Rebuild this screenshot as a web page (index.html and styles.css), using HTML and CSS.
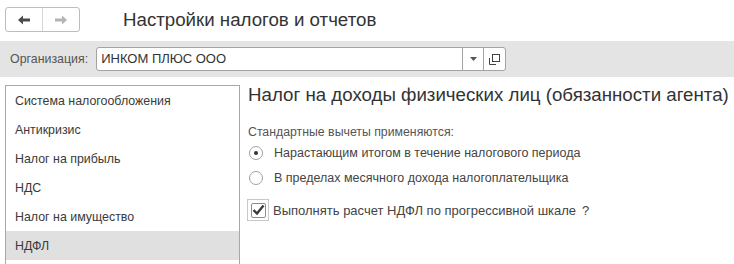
FILE: index.html
```html
<!DOCTYPE html>
<html lang="ru">
<head>
  <meta charset="UTF-8" />
  <title>Настройки налогов и отчетов</title>
  <link rel="stylesheet" href="styles.css">
</head>
<body>
  <!-- Top line: navigation and form title -->
  <div class="header">
    <div class="nav">
      <span class="nav-btn">
        <svg width="12" height="10" viewBox="0 0 12 10"><path d="M0 5 L5 0.5 V3.5 H12 V6.5 H5 V9.5 Z" fill="#4a4a4a"/></svg>
      </span>
      <span class="nav-btn">
        <svg width="12" height="10" viewBox="0 0 12 10"><path d="M12 5 L7 0.5 V3.5 H0 V6.5 H7 V9.5 Z" fill="#b4b4b4"/></svg>
      </span>
    </div>
    <h1 class="title">Настройки налогов и отчетов</h1>
  </div>

  <!-- Organization selector -->
  <div class="org-bar">
    <span class="org-label">Организация:</span>
    <div class="field">
      <span class="field-text">ИНКОМ ПЛЮС ООО</span>
      <span class="field-btn">
        <svg width="7" height="4" viewBox="0 0 7 4"><path d="M0 0 H7 L3.5 4 Z" fill="#555"/></svg>
      </span>
      <span class="field-btn field-open">
        <svg width="11" height="11" viewBox="0 0 11 11" fill="none" stroke="#444" stroke-width="1">
          <rect x="3.5" y="0.5" width="7" height="7"/>
          <path d="M0.5 4 V10.5 H7"/>
        </svg>
      </span>
    </div>
  </div>

  <div class="main">
    <ul class="sections">
      <li>Система налогообложения</li>
      <li>Антикризис</li>
      <li>Налог на прибыль</li>
      <li>НДС</li>
      <li>Налог на имущество</li>
      <li class="active">НДФЛ</li>
    </ul>

    <div class="content">
      <h2 class="content-title">Налог на доходы физических лиц (обязанности агента)</h2>
      <div class="caption">Стандартные вычеты применяются:</div>
      <label class="radio-row">
        <span class="radio checked"></span>
        Нарастающим итогом в течение налогового периода
      </label>
      <label class="radio-row">
        <span class="radio"></span>
        В пределах месячного дохода налогоплательщика
      </label>
      <label class="check-row">
        <span class="check-outer">
          <span class="check">
            <svg width="13" height="12" viewBox="0 0 13 12"><path d="M1.5 6 L5 9.5 L11.5 1.5" fill="none" stroke="#3c3c3c" stroke-width="2.4"/></svg>
          </span>
        </span>
        Выполнять расчет НДФЛ по прогрессивной шкале <span class="hint">?</span>
      </label>
    </div>
  </div>
</body>
</html>
```

FILE: styles.css
```css
body {
  margin: 0;
  font-family: "Liberation Sans", Arial, sans-serif;
  font-size: 13px;
  color: #444;
  background: #fff;
  overflow: hidden;
}

/* Header with back / forward */
.header {
  display: flex;
  align-items: center;
  height: 41px;
  padding-left: 5px;
}

.nav {
  display: flex;
  height: 23px;
  border: 1px solid #bdbdbd;
  border-radius: 3px;
  margin-top: -2px;
}

.nav-btn {
  width: 36px;
  display: flex;
  align-items: center;
  justify-content: center;
}

.nav-btn + .nav-btn {
  border-left: 1px solid #d6d6d6;
}

.title {
  margin: -2px 0 0 43px;
  font-size: 18.7px;
  font-weight: normal;
  color: #333;
}

/* Organization */
.org-bar {
  display: flex;
  align-items: center;
  height: 36px;
  background: #e4e4e4;
  padding-left: 10px;
}

.org-label {
  font-size: 12.4px;
  color: #555;
  margin-right: 8px;
}

.field {
  display: flex;
  width: 408px;
  height: 22px;
  background: #fff;
  border: 1px solid #a3a3a3;
  border-radius: 3px;
}

.field-text {
  flex: 1;
  padding-left: 4px;
  line-height: 22px;
  color: #333;
}

.field-btn {
  width: 20px;
  border-left: 1px solid #a3a3a3;
  display: flex;
  align-items: center;
  justify-content: center;
}

.field-open {
  width: 21px;
}

/* Sections and content */
.main {
  display: flex;
  margin-top: 8px;
}

.sections {
  list-style: none;
  margin: 0 0 0 5px;
  padding: 0;
  width: 233px;
  height: 179px;
  border: 1px solid #a8a8a8;
  border-bottom: none;
}

.sections li {
  height: 29px;
  line-height: 30px;
  padding-left: 9px;
  font-size: 12.4px;
  color: #3a3a3a;
}

.sections li.active {
  background: #e0e0e0;
}

.content {
  padding-left: 8px;
}

.content-title {
  margin: 0;
  font-size: 18.7px;
  font-weight: normal;
  color: #333;
  line-height: 20px;
}

.caption {
  margin-top: 19px;
  line-height: 16px;
  font-size: 12.3px;
  color: #555;
}

.radio-row {
  display: flex;
  align-items: center;
  height: 25px;
  font-size: 12.5px;
  color: #444;
}

.radio {
  box-sizing: border-box;
  width: 14px;
  height: 14px;
  border: 1px solid #a0a0a0;
  border-radius: 50%;
  margin: 0 11px 0 1px;
  position: relative;
}

.radio.checked::after {
  content: "";
  position: absolute;
  left: 4px;
  top: 4px;
  width: 4px;
  height: 4px;
  border-radius: 50%;
  background: #333;
}

.check-row {
  display: flex;
  align-items: center;
  margin-top: 9px;
  color: #444;
}

.check-outer {
  box-sizing: border-box;
  width: 22px;
  height: 22px;
  border: 1px solid #c8c8c8;
  display: flex;
  align-items: center;
  justify-content: center;
  margin: 0 4px 0 -1px;
}

.check {
  box-sizing: border-box;
  width: 15px;
  height: 15px;
  border: 1px solid #8c8c8c;
  border-radius: 2px;
  display: flex;
  align-items: center;
  justify-content: center;
}

.hint {
  margin-left: 6px;
}
```
